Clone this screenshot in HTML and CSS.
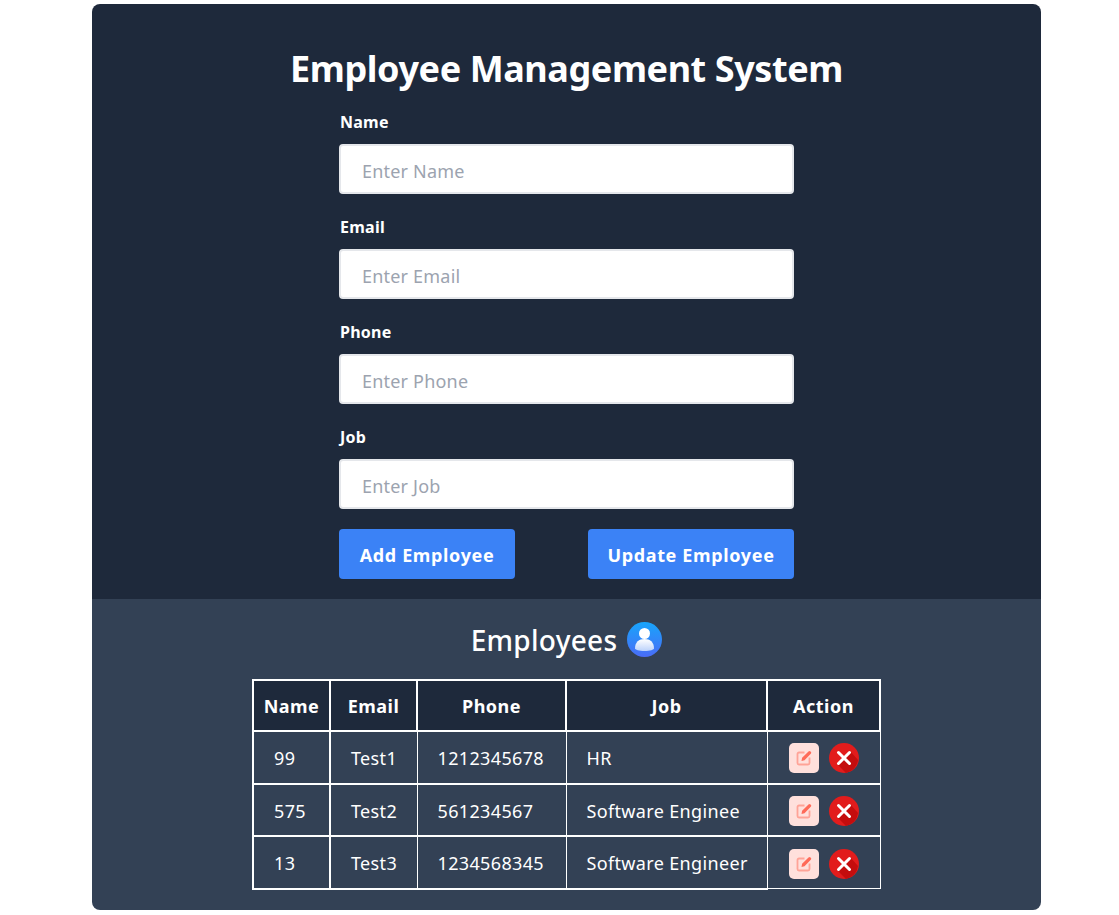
FILE: index.html
```html
<!DOCTYPE html>
<html lang="en">
<head>
<meta charset="utf-8">
<title>Employee Management System</title>
<link rel="stylesheet" href="styles.css">
</head>
<body>
<main class="card">
  <section class="top">
    <h1 class="title">Employee Management System</h1>
    <form class="form">
      <div class="field"><label class="label">Name</label><input class="input" placeholder="Enter Name"></div>
      <div class="field"><label class="label">Email</label><input class="input" placeholder="Enter Email"></div>
      <div class="field"><label class="label">Phone</label><input class="input" placeholder="Enter Phone"></div>
      <div class="field"><label class="label">Job</label><input class="input" placeholder="Enter Job"></div>
      <div class="buttons">
        <button type="button" class="btn btn-add">Add Employee</button>
        <button type="button" class="btn btn-update">Update Employee</button>
      </div>
    </form>
  </section>
  <section class="bottom">
    <h2 class="subtitle">Employees
      <svg class="person" viewBox="0 0 35 35" width="35" height="35">
        <defs>
          <linearGradient id="pg" x1="0" y1="0" x2="0" y2="1"><stop offset="0" stop-color="#17a5fb"/><stop offset="1" stop-color="#4a6cf7"/></linearGradient>
          <linearGradient id="pb" x1="0" y1="0" x2="0" y2="1"><stop offset="0" stop-color="#ffffff"/><stop offset="1" stop-color="#bcd2fb"/></linearGradient>
        </defs>
        <circle cx="17.5" cy="17.5" r="17.5" fill="url(#pg)"/>
        <circle cx="17.5" cy="11.5" r="5.5" fill="#fff"/>
        <path d="M8 26.5c0-6.5 4-9.5 9.5-9.5s9.5 3 9.5 9.5c0 1-4 2.5-9.5 2.5S8 27.500 8 26.500z" fill="url(#pb)"/>
      </svg>
    </h2>
    <table class="table">
      <colgroup>
        <col class="c-name"><col class="c-email"><col class="c-phone"><col class="c-job"><col class="c-action">
      </colgroup>
      <thead>
        <tr><th>Name</th><th>Email</th><th>Phone</th><th>Job</th><th>Action</th></tr>
      </thead>
      <tbody>
        <tr><td class="first">99</td><td>Test1</td><td>1212345678</td><td>HR</td>
          <td class="act"><div class="actions">
            <button type="button" class="icon-btn edit"><svg viewBox="0 0 16 16" width="16" height="16"><path d="M8.500 2.500H3A1.500 1.500 0 0 0 1.500 4v9A1.500 1.500 0 0 0 3 14.500h9a1.500 1.500 0 0 0 1.500-1.500V7.500" fill="none" stroke="#ffa397" stroke-width="1.800"/><path d="M5.500 11l.6-3.200L12.500 1.400a1.400 1.400 0 0 1 2 0l.3.300a1.400 1.400 0 0 1 0 2L8.500 10.300z" fill="#ff6a58"/></svg></button>
            <button type="button" class="icon-btn del"><svg viewBox="0 0 30 30" width="30" height="30"><circle cx="15" cy="15" r="15" fill="#e21c1c"/><path d="M21.500 8.500L29 17a15 15 0 0 1-12 12.900L8.500 21.500z" fill="#c40d0d"/><path d="M9.500 9.500l11 11M20.500 9.500l-11 11" stroke="#fff" stroke-width="3" stroke-linecap="round"/></svg></button>
          </div></td></tr>
        <tr><td class="first">575</td><td>Test2</td><td>561234567</td><td>Software Enginee</td>
          <td class="act"><div class="actions">
            <button type="button" class="icon-btn edit"><svg viewBox="0 0 16 16" width="16" height="16"><path d="M8.500 2.500H3A1.500 1.500 0 0 0 1.500 4v9A1.500 1.500 0 0 0 3 14.500h9a1.500 1.500 0 0 0 1.500-1.500V7.500" fill="none" stroke="#ffa397" stroke-width="1.800"/><path d="M5.500 11l.6-3.200L12.500 1.400a1.400 1.400 0 0 1 2 0l.3.300a1.400 1.400 0 0 1 0 2L8.500 10.300z" fill="#ff6a58"/></svg></button>
            <button type="button" class="icon-btn del"><svg viewBox="0 0 30 30" width="30" height="30"><circle cx="15" cy="15" r="15" fill="#e21c1c"/><path d="M21.500 8.500L29 17a15 15 0 0 1-12 12.900L8.500 21.500z" fill="#c40d0d"/><path d="M9.500 9.500l11 11M20.500 9.500l-11 11" stroke="#fff" stroke-width="3" stroke-linecap="round"/></svg></button>
          </div></td></tr>
        <tr><td class="first">13</td><td>Test3</td><td>1234568345</td><td>Software Engineer</td>
          <td class="act"><div class="actions">
            <button type="button" class="icon-btn edit"><svg viewBox="0 0 16 16" width="16" height="16"><path d="M8.500 2.500H3A1.500 1.500 0 0 0 1.500 4v9A1.500 1.500 0 0 0 3 14.500h9a1.500 1.500 0 0 0 1.500-1.500V7.500" fill="none" stroke="#ffa397" stroke-width="1.800"/><path d="M5.500 11l.6-3.200L12.500 1.400a1.400 1.400 0 0 1 2 0l.3.300a1.400 1.400 0 0 1 0 2L8.500 10.300z" fill="#ff6a58"/></svg></button>
            <button type="button" class="icon-btn del"><svg viewBox="0 0 30 30" width="30" height="30"><circle cx="15" cy="15" r="15" fill="#e21c1c"/><path d="M21.500 8.500L29 17a15 15 0 0 1-12 12.900L8.500 21.500z" fill="#c40d0d"/><path d="M9.500 9.500l11 11M20.500 9.500l-11 11" stroke="#fff" stroke-width="3" stroke-linecap="round"/></svg></button>
          </div></td></tr>
      </tbody>
    </table>
  </section>
</main>
</body>
</html>
```
FILE: styles.css
```css
* { box-sizing: border-box; }
html, body { margin: 0; padding: 0; background: #fff; }
body { font-family: "Noto Sans", "Open Sans", sans-serif; color: #fff; padding: 4px 0 5px 92px; }
.card { width: 949px; border-radius: 8px; overflow: hidden; }
.top { background: #1e293b; height: 595px; padding-top: 41px; }
.title { margin: 0; height: 48px; line-height: 48px; font-size: 36px; font-weight: 700; text-align: center; letter-spacing: -0.42px; }
.form { width: 455px; margin: 0 0 0 247px; padding-top: 18px; }
.field { height: 105px; }
.label { display: block; height: 24px; line-height: 22px; font-size: 16px; font-weight: 700; margin-bottom: 9px; padding-left: 1px; letter-spacing: 0.25px; }
.input { display: block; width: 100%; height: 50px; border: 2px solid #e5e7eb; border-radius: 4px; padding: 4px 21px 0; font: inherit; font-size: 18px; letter-spacing: 0.2px; background: #fff; outline: none; }
.input::placeholder { color: #9ca3af; opacity: 1; }
.buttons { display: flex; justify-content: space-between; margin-top: -2px; }
.btn { height: 50px; border: 0; border-radius: 4px; background: #3b82f6; color: #fff; font: inherit; font-size: 18px; font-weight: 700; letter-spacing: 0.65px; padding: 2px 0 0; text-align: center; }
.btn-add { width: 176px; }
.btn-update { width: 206px; }
.bottom { background: #334155; height: 311px; padding-top: 20px; }
.subtitle { margin: 0 0 20px; height: 40px; padding-top: 2px; display: flex; align-items: center; justify-content: center; gap: 10px; font-size: 28px; font-weight: 500; letter-spacing: 0.27px; }
.person { display: block; margin-top: -2px; }
.table { border-collapse: collapse; table-layout: fixed; width: 627px; margin-left: 160px; font-size: 18px; }
.c-name { width: 77px; }
.c-email { width: 87px; }
.c-phone { width: 149px; }
.c-job { width: 201px; }
.c-action { width: 113px; }
th { height: 51px; border: 2px solid #fff; background: #1e293b; font-size: 18px; font-weight: 700; padding: 1px 0 0; text-align: center; letter-spacing: 0.5px; }
td { height: 52.500px; border: 1px solid #fff; padding: 2px 0 0 20px; letter-spacing: 0.35px; text-align: left; }
td.first { border-left-width: 2px; border-right-width: 2px; border-bottom-width: 2px; }
td:not(.first) { border-bottom-width: 2px; }
tbody tr:last-child td.act { border-bottom-width: 1px; }
td.act { padding: 2px 0 0; }
.actions { display: flex; justify-content: center; gap: 10px; }
.icon-btn { width: 30px; height: 30px; padding: 0; border: 0; display: flex; align-items: center; justify-content: center; }
.edit { background: #ffe0dc; border-radius: 5px; }
.del { background: none; border-radius: 50%; }
```
